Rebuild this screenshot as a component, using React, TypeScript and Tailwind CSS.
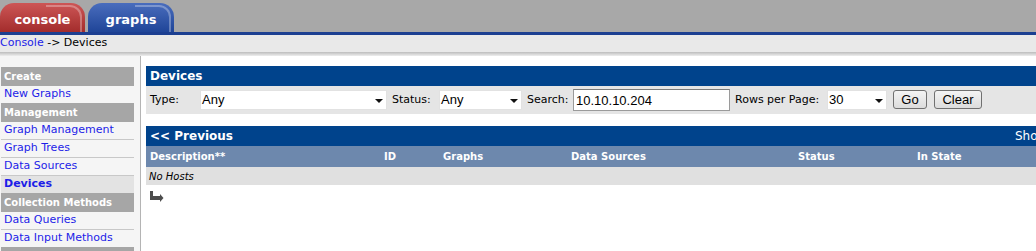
import React from "react";

/**
 * Cacti console: Devices list with filter bar and left navigation
 */

type MenuEntry = { label: string; header?: boolean; first?: boolean; active?: boolean };

const menu: MenuEntry[] = [
  { label: "Create", header: true },
  { label: "New Graphs", first: true },
  { label: "Management", header: true },
  { label: "Graph Management", first: true },
  { label: "Graph Trees" },
  { label: "Data Sources" },
  { label: "Devices", active: true },
  { label: "Collection Methods", header: true },
  { label: "Data Queries", first: true },
  { label: "Data Input Methods" },
  { label: "", header: true },
];

function Tab({ label, tone }: { label: string; tone: "red" | "blue" }) {
  const bg =
    tone === "red"
      ? "w-[85px] bg-linear-to-b from-[#cd5656] to-[#a32c2c]"
      : "w-[86px] bg-linear-to-b from-[#4a6dbd] to-[#1f4598]";
  return (
    <div className={`relative h-[29px] rounded-t-[14px] ${bg} flex items-center justify-center pt-[4px]`}>
      {/* glossy edge highlight */}
      <span className="pointer-events-none absolute top-[2px] right-[3px] w-[36px] h-[27px] rounded-tr-[12px] border-t-2 border-r-2 border-white/30" />
      <span className="relative text-white font-bold text-[13px] leading-none">{label}</span>
    </div>
  );
}

function Select({ value, width }: { value: string; width: string }) {
  return (
    <div className={`relative h-[20px] ${width} bg-white border border-[#e2e2e2] flex items-center pl-[1px] font-['Liberation_Sans',Arial,sans-serif] text-[13px] text-black`}>
      {value}
      <svg className="absolute right-[3px] top-[8px]" width="8" height="4" viewBox="0 0 8 4">
        <path d="M0 0h8L4 4z" fill="#111" />
      </svg>
    </div>
  );
}

function Button({ label, width }: { label: string; width: string }) {
  return (
    <button className={`h-[19px] ${width} rounded-[3px] border border-[#707070] bg-linear-to-b from-[#f4f4f4] to-[#dcdcdc] font-['Liberation_Sans',Arial,sans-serif] text-[13px] text-black leading-none`}>
      {label}
    </button>
  );
}

export default function App() {
  return (
    <div className="w-[1036px] h-[251px] overflow-hidden bg-white flex flex-col font-['DejaVu_Sans',Verdana,sans-serif]">
      {/* Tabs */}
      <div className="h-[32px] bg-[#a8a8a8] flex items-end gap-[3px]">
        <Tab label="console" tone="red" />
        <Tab label="graphs" tone="blue" />
      </div>
      <div className="h-[3px] bg-[#1c3f91]" />

      {/* Breadcrumb */}
      <div className="h-[17px] bg-[#e9e9e9] flex items-center text-[11px] text-black">
        <span className="text-[#1d1de8]">Console</span>
        <span>&nbsp;-&gt; Devices</span>
      </div>
      <div className="h-[4px] bg-linear-to-b from-[#bcbcbc] to-[#eeeeee]" />

      <div className="flex flex-1 min-h-0">
        {/* Navigation */}
        <div className="w-[141px] shrink-0 bg-[#f5f5f5] border-r border-[#b4b4b4] pt-[11px] pl-[1px]">
          {menu.map((m, i) =>
            m.header ? (
              <div key={i} className="w-[133px] h-[19px] bg-[#a6a6a6] flex items-center pl-[3px] text-[10px] font-bold text-white">
                {m.label}
              </div>
            ) : (
              <div
                key={i}
                className={`w-[133px] flex items-center pl-[3px] text-[11px] text-[#1d1de8] ${
                  m.first ? "h-[17px]" : "h-[18px] border-t border-[#c8c8c8]"
                } ${m.active ? "bg-[#e3e3e3] font-bold" : ""}`}
              >
                {m.label}
              </div>
            )
          )}
        </div>

        {/* Main */}
        <div className="flex-1 min-w-0 pl-[5px] pt-[10px]">
          <div className="w-[1100px]">
            <div className="h-[20px] bg-[#00438c] flex items-center pl-[4px] text-[12px] font-bold text-white">
              Devices
            </div>
            <div className="h-[28px] bg-[#e5e5e5] flex items-center text-[11px] text-black">
              <span className="w-[54px] pl-[4px]">Type:</span>
              <Select value="Any" width="w-[187px]" />
              <span className="w-[52px] pl-[5px]">Status:</span>
              <Select value="Any" width="w-[83px]" />
              <span className="w-[51px] pl-[5px]">Search:</span>
              <input
                readOnly
                value="10.10.10.204"
                className="h-[22px] w-[157px] bg-white border border-[#9a9a9a] border-t-[#7a7a7a] pl-[2px] font-['Liberation_Sans',Arial,sans-serif] text-[13px] text-black outline-none"
              />
              <span className="w-[97px] pl-[5px]">Rows per Page:</span>
              <Select value="30" width="w-[60px]" />
              <div className="ml-[6px]">
                <Button label="Go" width="w-[34px]" />
              </div>
              <div className="ml-[7px]">
                <Button label="Clear" width="w-[48px]" />
              </div>
            </div>

            <div className="mt-[12px] h-[20px] bg-[#00438c] flex items-center text-white whitespace-nowrap">
              <span className="w-[869px] shrink-0 pl-[4px] text-[12px] font-bold">&lt;&lt; Previous</span>
              <span className="text-[12px]">Showing Rows 0 to 0 of 0</span>
            </div>
            <div className="h-[21px] bg-[#6d88ad] flex items-center text-[10px] font-bold text-white">
              <span className="w-[234px] pl-[4px]">Description**</span>
              <span className="w-[59px] pl-[4px]">ID</span>
              <span className="w-[128px] pl-[4px]">Graphs</span>
              <span className="w-[227px] pl-[4px]">Data Sources</span>
              <span className="w-[119px] pl-[4px]">Status</span>
              <span className="w-[120px] pl-[4px]">In State</span>
            </div>
            <div className="h-[18px] bg-[#e0e0e0] flex items-center pl-[3px] text-[10px] italic text-black">
              No Hosts
            </div>
            <div className="mt-[5px] pl-[4px]">
              <svg width="14" height="13" viewBox="0 0 14 13">
                <path d="M0 1h3v5h7V4l3.5 4L10 12V10H0z" fill="#4d4d4d" />
              </svg>
            </div>
          </div>
        </div>
      </div>
    </div>
  );
}
